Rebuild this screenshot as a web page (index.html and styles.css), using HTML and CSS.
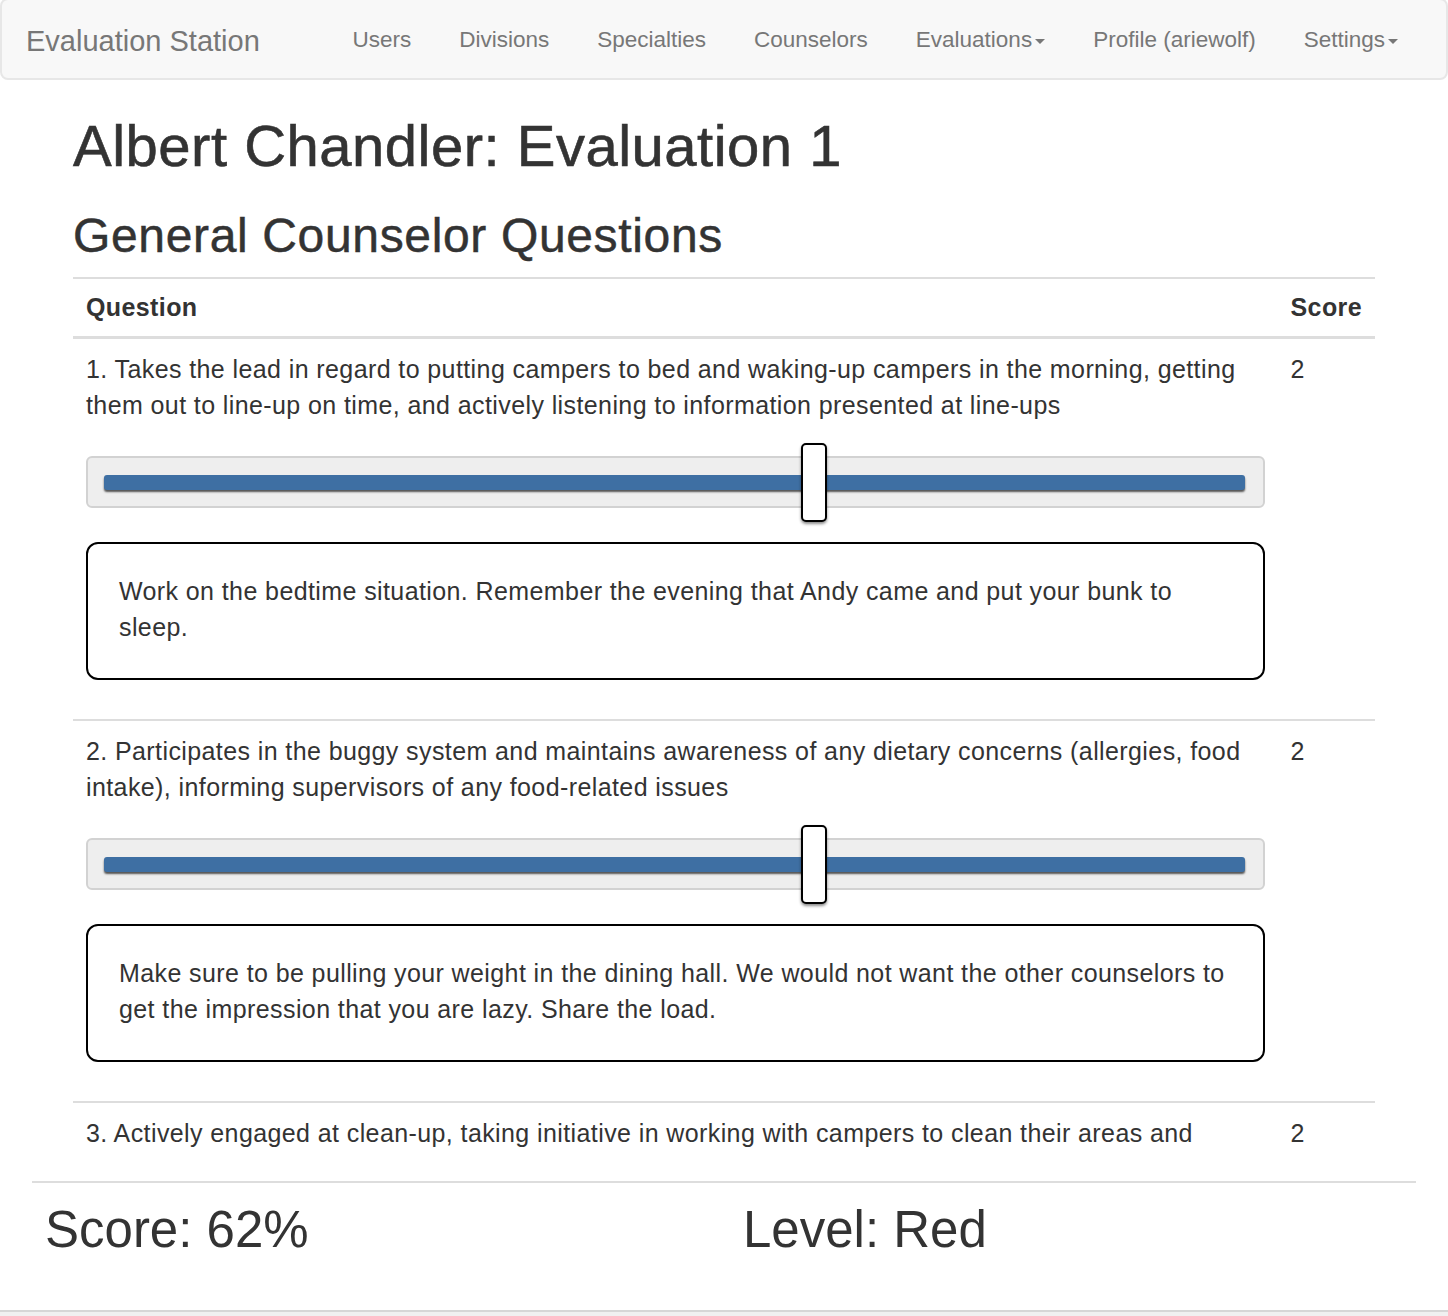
FILE: index.html
```html
<!DOCTYPE html>
<html lang="en">
<head>
    <meta charset="UTF-8">
    <meta name="viewport" content="width=device-width, initial-scale=1.0">
    <title>Evaluation Station</title>
    <link rel="stylesheet" href="styles.css">
</head>
<body>
    <nav class="navbar">
        <a class="brand" href="#">Evaluation Station</a>
        <ul class="nav">
            <li><a href="#">Users</a></li>
            <li><a href="#">Divisions</a></li>
            <li><a href="#">Specialties</a></li>
            <li><a href="#">Counselors</a></li>
            <li><a href="#">Evaluations<span class="caret"></span></a></li>
            <li><a href="#">Profile (ariewolf)</a></li>
            <li><a href="#">Settings<span class="caret"></span></a></li>
        </ul>
    </nav>

    <div class="container">
        <h1>Albert Chandler: Evaluation 1</h1>
        <h2>General Counselor Questions</h2>

        <table class="questions">
            <thead>
                <tr>
                    <th>Question</th>
                    <th class="score-col">Score</th>
                </tr>
            </thead>
            <tbody>
                <tr>
                    <td>
                        <div class="question-text">1. Takes the lead in regard to putting campers to bed and waking-up campers in the morning, getting them out to line-up on time, and actively listening to information presented at line-ups</div>
                        <div class="slider">
                            <div class="slider-track"></div>
                            <div class="slider-handle" style="left: 61.8%"></div>
                        </div>
                        <div class="note">Work on the bedtime situation. Remember the evening that Andy came and put your bunk to sleep.</div>
                    </td>
                    <td class="score-col">2</td>
                </tr>
                <tr>
                    <td>
                        <div class="question-text">2. Participates in the buggy system and maintains awareness of any dietary concerns (allergies, food intake), informing supervisors of any food-related issues</div>
                        <div class="slider">
                            <div class="slider-track"></div>
                            <div class="slider-handle" style="left: 61.8%"></div>
                        </div>
                        <div class="note">Make sure to be pulling your weight in the dining hall. We would not want the other counselors to get the impression that you are lazy. Share the load.</div>
                    </td>
                    <td class="score-col">2</td>
                </tr>
                <tr>
                    <td>
                        <div class="question-text">3. Actively engaged at clean-up, taking initiative in working with campers to clean their areas and common spaces, and leaving the bunk in good shape</div>
                        <div class="slider">
                            <div class="slider-track"></div>
                            <div class="slider-handle" style="left: 61.8%"></div>
                        </div>
                    </td>
                    <td class="score-col">2</td>
                </tr>
            </tbody>
        </table>
    </div>

    <footer class="score-bar">
        <div class="score-row">
            <div class="score-cell">Score: 62%</div>
            <div class="score-cell">Level: Red</div>
        </div>
        <div class="score-edge"></div>
    </footer>
</body>
</html>
```

FILE: styles.css
```css
* {
    box-sizing: border-box;
}

body {
    margin: 0;
    font-family: "Liberation Sans", Arial, sans-serif;
    font-size: 25px;
    line-height: 36px;
    letter-spacing: 0.4px;
    color: #333;
    background: #fff;
}

/* navbar */
.navbar {
    display: flex;
    align-items: center;
    justify-content: space-between;
    height: 82px;
    margin: -2px 0 0;
    padding: 0 24px;
    background: #f8f8f8;
    border: 2px solid #e7e7e7;
    border-radius: 8px;
    letter-spacing: 0;
}

.brand {
    font-size: 29px;
    line-height: 30px;
    padding-top: 4px;
    color: #777;
    text-decoration: none;
}

.nav {
    display: flex;
    list-style: none;
    margin: 0;
    padding: 0;
}

.nav a {
    display: block;
    padding: 2px 24px 0;
    font-size: 22.5px;
    line-height: 30px;
    color: #777;
    text-decoration: none;
}

.caret {
    display: inline-block;
    width: 0;
    height: 0;
    margin-left: 3px;
    vertical-align: middle;
    border-top: 5px solid #777;
    border-left: 5px solid transparent;
    border-right: 5px solid transparent;
}

/* page */
.container {
    width: 1302px;
    margin: 0 auto;
}

h1 {
    margin: 34px 0 0;
    font-size: 58px;
    line-height: 64px;
    font-weight: 500;
    letter-spacing: 0.5px;
    -webkit-text-stroke: 0.6px #333;
}

h2 {
    margin: 31px 0 15px;
    font-size: 48px;
    line-height: 53px;
    font-weight: 500;
    letter-spacing: 0.65px;
    -webkit-text-stroke: 0.5px #333;
}

/* table */
.questions {
    width: 100%;
    border-collapse: collapse;
}

.questions th {
    text-align: left;
    padding: 10px 13px 11px;
    border-top: 2px solid #ddd;
    border-bottom: 3px solid #ddd;
}

.questions td {
    vertical-align: top;
    padding: 12px 13px 14px;
    border-top: 2px solid #ddd;
}

.questions .score-col {
    width: 97px;
}

.slider {
    position: relative;
    height: 52px;
    margin-top: 33px;
    padding: 17px 18px 16px 16px;
    background: #eee;
    border: 2px solid #d2d2d2;
    border-radius: 6px;
}

.slider-track {
    height: 15px;
    background: #3e6fa3;
    border-radius: 3px;
    box-shadow: 0 2px 2px rgba(0, 0, 0, 0.65);
}

.slider-handle {
    position: absolute;
    top: -15px;
    width: 26px;
    height: 79px;
    margin-left: -13px;
    background: #fff;
    border: 2px solid #000;
    border-radius: 5px;
    box-shadow: 0 2px 3px rgba(0, 0, 0, 0.45);
}

.note {
    margin: 34px 0 25px;
    padding: 29px 31px 33px;
    border: 2px solid #000;
    border-radius: 12px;
}

/* bottom score bar */
.score-bar {
    position: fixed;
    left: 0;
    right: 0;
    bottom: 0;
    padding-top: 30px;
    background: #fff;
    letter-spacing: 0;
}

.score-row {
    display: grid;
    grid-template-columns: 698px 1fr;
    margin: 0 32px;
    padding: 19px 13px 52px;
    border-top: 2px solid #ddd;
}

.score-cell {
    font-size: 51px;
    line-height: 56px;
}

.score-edge {
    height: 6px;
    background: #f0f0f0;
    border-top: 2px solid #d6d6d6;
}
```
